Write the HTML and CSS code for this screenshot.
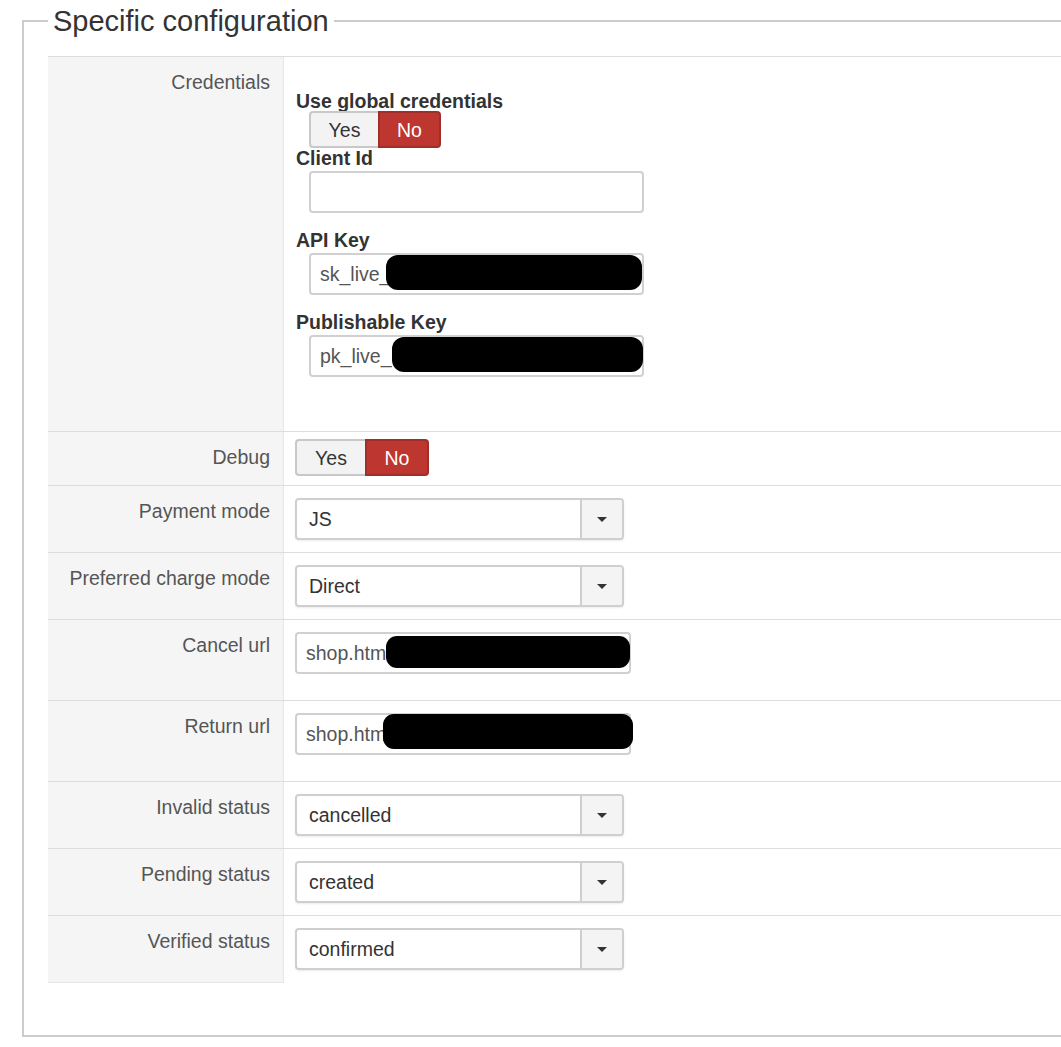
FILE: index.html
```html
<!DOCTYPE html>
<html>
<head>
<meta charset="utf-8">
<link rel="stylesheet" href="styles.css">
</head>
<body>
<fieldset class="config">
  <legend class="config-legend">Specific configuration</legend>
  <div class="table">
    <div class="row row-cred">
      <div class="lbl">Credentials</div>
      <div class="ctl ctl-cred">
        <div class="sub-label">Use global credentials</div>
        <div class="toggle indent">
          <span class="tbtn yes">Yes</span><span class="tbtn no">No</span>
        </div>
        <div class="sub-label">Client Id</div>
        <div class="input indent key"></div>
        <div class="sub-label">API Key</div>
        <div class="input indent key"><span class="val">sk_live_</span><span class="redact r-sk"></span></div>
        <div class="sub-label">Publishable Key</div>
        <div class="input indent key last"><span class="val">pk_live_</span><span class="redact r-pk"></span></div>
      </div>
    </div>
    <div class="row row-toggle">
      <div class="lbl">Debug</div>
      <div class="ctl ctl-toggle">
        <div class="toggle toggle-debug">
          <span class="tbtn yes">Yes</span><span class="tbtn no">No</span>
        </div>
      </div>
    </div>
    <div class="row">
      <div class="lbl">Payment mode</div>
      <div class="ctl"><div class="select"><span class="sel-val">JS</span><span class="sel-arrow"><i class="caret"></i></span></div></div>
    </div>
    <div class="row">
      <div class="lbl">Preferred charge mode</div>
      <div class="ctl"><div class="select"><span class="sel-val">Direct</span><span class="sel-arrow"><i class="caret"></i></span></div></div>
    </div>
    <div class="row">
      <div class="lbl">Cancel url</div>
      <div class="ctl ctl-url"><div class="input url"><span class="val">shop.htm</span><span class="redact r-cancel"></span></div></div>
    </div>
    <div class="row">
      <div class="lbl">Return url</div>
      <div class="ctl ctl-url"><div class="input url"><span class="val">shop.htm</span><span class="redact r-return"></span></div></div>
    </div>
    <div class="row">
      <div class="lbl">Invalid status</div>
      <div class="ctl"><div class="select"><span class="sel-val">cancelled</span><span class="sel-arrow"><i class="caret"></i></span></div></div>
    </div>
    <div class="row">
      <div class="lbl">Pending status</div>
      <div class="ctl"><div class="select"><span class="sel-val">created</span><span class="sel-arrow"><i class="caret"></i></span></div></div>
    </div>
    <div class="row row-last">
      <div class="lbl">Verified status</div>
      <div class="ctl"><div class="select"><span class="sel-val">confirmed</span><span class="sel-arrow"><i class="caret"></i></span></div></div>
    </div>
  </div>
</fieldset>
</body>
</html>
```
FILE: styles.css
```css
html, body {
  margin: 0;
  padding: 0;
  overflow: hidden;
  background: #fff;
}
body {
  font-family: "Liberation Sans", Arial, sans-serif;
  font-size: 19.5px;
  color: #333;
  width: 1061px;
  height: 1047px;
}
.config {
  margin: 4px 0 0 22px;
  padding: 18px 0 52px 24px;
  border: 2px solid #cccccc;
  width: 1150px;
  box-sizing: content-box;
}
.config-legend {
  font-size: 29px;
  line-height: 34px;
  padding: 0 5px;
  color: #333;
}
.table {
  display: flex;
  flex-direction: column;
}
.row {
  display: flex;
  border-top: 1px solid #dddddd;
}
.lbl {
  width: 236px;
  box-sizing: border-box;
  flex: none;
  background: #f5f5f5;
  border-right: 1px solid #e6e6e6;
  text-align: right;
  padding: 15px 13px 0 0;
  line-height: 20px;
  color: #555;
}
.row-last .lbl {
  border-bottom: 1px solid #e6e6e6;
}
.ctl {
  flex: 1;
  padding: 12px 0 12px 11px;
  display: flex;
  flex-direction: column;
  align-items: flex-start;
}
.ctl-cred {
  padding-top: 34px;
  padding-bottom: 54px;
}
.ctl-toggle {
  padding-top: 7px;
  padding-bottom: 9px;
}
.ctl-url {
  padding-bottom: 26px;
}
.row-last .ctl {
  padding-bottom: 13px;
}
.sub-label {
  font-weight: bold;
  line-height: 20px;
  padding-left: 1px;
  color: #333;
}
.indent {
  margin-left: 14px;
}
.toggle {
  display: flex;
  height: 37px;
}
.tbtn {
  box-sizing: border-box;
  display: flex;
  align-items: center;
  justify-content: center;
  height: 37px;
  line-height: 20px;
}
.tbtn.yes {
  width: 69px;
  background: #f3f3f3;
  border: 2px solid #c8c8c8;
  border-right: none;
  border-radius: 4px 0 0 4px;
  color: #333;
}
.tbtn.no {
  width: 63px;
  background: #bd362f;
  border: 2px solid #a02f29;
  border-radius: 0 4px 4px 0;
  color: #fff;
}
.toggle-debug .tbtn.yes { width: 70px; }
.toggle-debug .tbtn.no { width: 64px; }
.input {
  position: relative;
  box-sizing: border-box;
  height: 42px;
  border: 2px solid #d0d0d0;
  border-radius: 4px;
  background: #fff;
  display: flex;
  align-items: center;
  color: #555;
}
.input.key {
  width: 335px;
  padding-left: 9px;
  margin-top: 3px;
  margin-bottom: 17px;
}
.input.key.last {
  margin-bottom: 0;
}
.input.url {
  width: 336px;
  padding-left: 9px;
}
.redact {
  position: absolute;
  background: #000;
  border-radius: 12px;
}
.r-sk { left: 75px; top: 0; width: 256px; height: 35px; }
.r-pk { left: 81px; top: 0; width: 251px; height: 35px; }
.r-cancel { left: 89px; top: 2px; width: 244px; height: 32px; border-radius: 11px; }
.r-return { left: 86px; top: -1px; width: 250px; height: 35px; border-radius: 11px; }
.select {
  box-sizing: border-box;
  width: 329px;
  height: 42px;
  border: 2px solid #cfcfcf;
  border-radius: 4px;
  background: #fff;
  display: flex;
  align-items: stretch;
  box-shadow: 0 1px 2px rgba(0, 0, 0, 0.08);
}
.sel-val {
  flex: 1;
  display: flex;
  align-items: center;
  padding-left: 12px;
  color: #333;
}
.sel-arrow {
  width: 40px;
  flex: none;
  border-left: 2px solid #cfcfcf;
  background: #f4f4f4;
  border-radius: 0 3px 3px 0;
  display: flex;
  align-items: center;
  justify-content: center;
}
.caret {
  width: 0;
  height: 0;
  border-left: 5px solid transparent;
  border-right: 5px solid transparent;
  border-top: 5px solid #333;
}
```
